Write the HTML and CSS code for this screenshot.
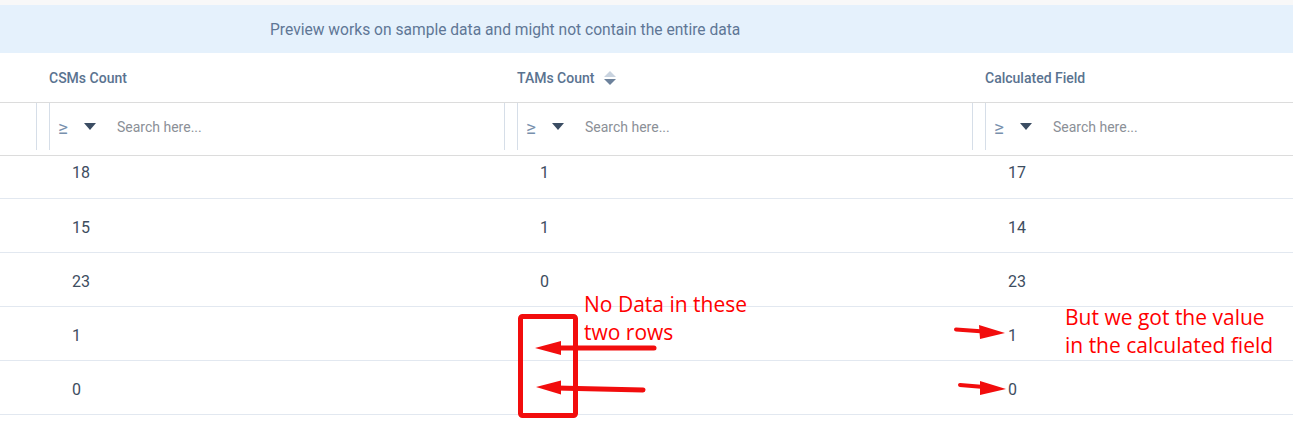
FILE: index.html
```html
<!DOCTYPE html>
<html>
<head>
<meta charset="utf-8">
<link rel="stylesheet" href="styles.css">
</head>
<body>
<div class="page">
  <div class="banner">Preview works on sample data and might not contain the entire data</div>
  <div class="grid">
    <div class="row head">
      <div class="lead"></div>
      <div class="cell hcell">CSMs Count</div>
      <div class="cell hcell">TAMs Count
        <svg class="sort" width="12" height="14" viewBox="0 0 12 14"><polygon points="0,6 6,0 12,6" fill="#c9d3df"/><polygon points="0,8 12,8 6,14" fill="#6c819b"/></svg>
      </div>
      <div class="cell hcell">Calculated Field</div>
    </div>
    <div class="row filter">
      <div class="lead"></div>
      <div class="cell fcell"><div class="fbox"><span class="ge">≥</span><svg class="caret" width="12" height="7" viewBox="0 0 12 7"><polygon points="0,0 12,0 6,7" fill="#3b4d63"/></svg><span class="ph">Search here...</span></div></div>
      <div class="cell fcell"><div class="fbox"><span class="ge">≥</span><svg class="caret" width="12" height="7" viewBox="0 0 12 7"><polygon points="0,0 12,0 6,7" fill="#3b4d63"/></svg><span class="ph">Search here...</span></div></div>
      <div class="cell fcell"><div class="fbox"><span class="ge">≥</span><svg class="caret" width="12" height="7" viewBox="0 0 12 7"><polygon points="0,0 12,0 6,7" fill="#3b4d63"/></svg><span class="ph">Search here...</span></div></div>
    </div>
    <div class="row data first">
      <div class="lead"></div><div class="cell dcell">18</div><div class="cell dcell">1</div><div class="cell dcell">17</div>
    </div>
    <div class="row data">
      <div class="lead"></div><div class="cell dcell">15</div><div class="cell dcell">1</div><div class="cell dcell">14</div>
    </div>
    <div class="row data">
      <div class="lead"></div><div class="cell dcell">23</div><div class="cell dcell">0</div><div class="cell dcell">23</div>
    </div>
    <div class="row data">
      <div class="lead"></div><div class="cell dcell">1</div><div class="cell dcell"></div><div class="cell dcell">1</div>
    </div>
    <div class="row data">
      <div class="lead"></div><div class="cell dcell">0</div><div class="cell dcell"></div><div class="cell dcell">0</div>
    </div>
  </div>

  <svg class="marks" width="1293" height="426" viewBox="0 0 1293 426">
    <rect x="520.5" y="316.5" width="55" height="99" rx="2" fill="none" stroke="#f20d0d" stroke-width="5"/>
    <line x1="654" y1="348" x2="556" y2="348" stroke="#f20d0d" stroke-width="5" stroke-linecap="round"/>
    <polygon points="535,348 561,341 561,355" fill="#f20d0d"/>
    <line x1="643" y1="390" x2="556" y2="388" stroke="#f20d0d" stroke-width="5" stroke-linecap="round"/>
    <polygon points="536,387 561,380.5 561,394.5" fill="#f20d0d"/>
    <line x1="956" y1="329.5" x2="984" y2="331.5" stroke="#f20d0d" stroke-width="4" stroke-linecap="round"/>
    <polygon points="1005,333 979,325 980,339" fill="#f20d0d"/>
    <line x1="960" y1="385" x2="984" y2="387" stroke="#f20d0d" stroke-width="4" stroke-linecap="round"/>
    <polygon points="1006,389 980,381 980,395" fill="#f20d0d"/>
  </svg>
  <div class="note note1">No Data in these<br>two rows</div>
  <div class="note note2">But we got the value<br>in the calculated field</div>
</div>
</body>
</html>
```

FILE: styles.css
```css
* { box-sizing: border-box; }
html, body { margin: 0; padding: 0; }
body {
  background: #f8f8f8;
  font-family: Roboto, "Liberation Sans", sans-serif;
  width: 1293px;
  height: 426px;
  overflow: hidden;
}
.page {
  position: relative;
  width: 1293px;
  height: 426px;
  padding-top: 5px;
  overflow: hidden;
}
.banner {
  height: 48px;
  background: #e5f1fc;
  color: #5f7796;
  font-size: 15.6px;
  display: flex;
  align-items: center;
  padding-left: 270px;
  padding-top: 2px;
}
.grid {
  background: #fff;
  width: 1293px;
  height: 373px;
  overflow: hidden;
}
.row {
  display: flex;
}
.lead { width: 36px; flex: none; }
.cell {
  width: 468px;
  flex: none;
}
.head {
  height: 50px;
  border-bottom: 1px solid #dcdcdc;
}
.hcell {
  display: flex;
  align-items: center;
  padding-left: 13px;
  font-size: 14px;
  font-weight: 500;
  color: #5a7390;
}
.sort { margin-left: 10px; }
.filter {
  height: 53px;
  border-bottom: 1px solid #dcdcdc;
}
.fcell {
  height: 47px;
  border-left: 1px solid #d6dee8;
  padding-left: 12px;
}
.fbox {
  height: 47px;
  border-left: 1px solid #d6dee8;
  display: flex;
  align-items: center;
  padding-left: 8px;
}
.ge {
  color: #7890ad;
  font-size: 19px;
  width: 26px;
  margin-top: 1px;
}
.caret { margin-right: 21px; margin-top: -1px; }
.ph {
  color: #8b9097;
  font-size: 14px;
}
.data {
  height: 54px;
  border-bottom: 1px solid #e2e8f0;
}
.data.first { height: 43px; }
.dcell {
  display: flex;
  align-items: center;
  padding-left: 36px;
  padding-top: 4px;
  font-size: 16px;
  color: #3d4d60;
}
.data.first .dcell { padding-top: 0; padding-bottom: 9px; }
.marks {
  position: absolute;
  left: 0;
  top: 0;
  pointer-events: none;
}
.note {
  position: absolute;
  font-family: "Open Sans", sans-serif;
  font-size: 21px;
  line-height: 28px;
  color: #ff0000;
  white-space: nowrap;
}
.note1 { left: 584px; top: 290px; }
.note2 { left: 1065px; top: 303px; }
```
